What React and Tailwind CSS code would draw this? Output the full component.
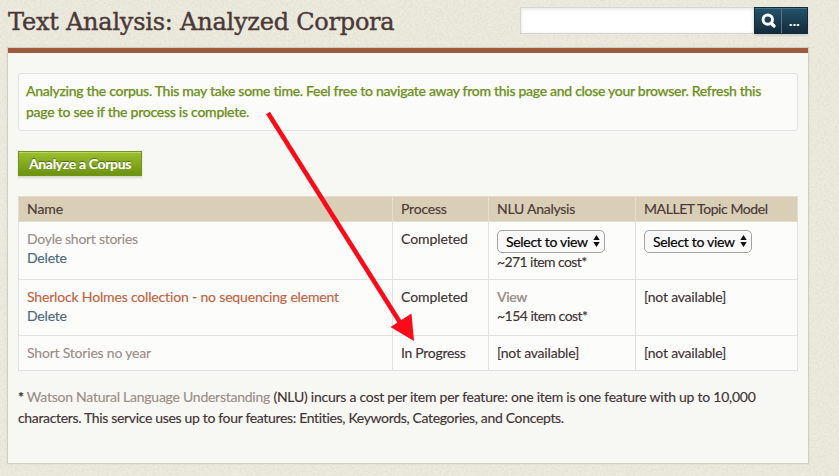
import React from "react";

function PaperTexture() {
  return (
    <svg className="pointer-events-none absolute inset-0 h-full w-full" aria-hidden="true">
      <filter id="paper" x="0" y="0" width="100%" height="100%">
        <feTurbulence type="fractalNoise" baseFrequency="0.45" numOctaves="2" seed="4" />
        <feColorMatrix values="0 0 0 0 0.5  0 0 0 0 0.47  0 0 0 0 0.36  0.5 0.5 0 0 -0.38" />
      </filter>
      <rect width="100%" height="100%" filter="url(#paper)" opacity="0.45" />
    </svg>
  );
}

function SelectBox() {
  return (
    <button className="mt-px flex h-[23px] w-[108px] items-center rounded-[5px] border border-[#a3a3a3] bg-[#f9f9f9] pb-px pl-2 text-[14px] leading-[19px] text-black">
      <span className="w-[87px] text-left whitespace-nowrap tracking-[-0.3px] [-webkit-text-stroke:0.2px_#000]">Select to view</span>
      <svg className="h-3 w-[7px]" viewBox="0 0 7 12" fill="#111">
        <path d="M3.5 0 6.7 5H.3zM3.5 12 .3 7h6.4z" />
      </svg>
    </button>
  );
}

function SearchBar() {
  return (
    <div className="flex h-[27px] w-[288px]">
      <input className="h-[27px] min-w-0 flex-1 border border-r-0 border-[#d5d5d2] bg-white shadow-[inset_0_1px_4px_#e4e4e4] outline-none" />
      <div className="flex h-[27px] w-[54px] border border-[#142b3b] bg-gradient-to-b from-[#24536b] to-[#142b3b] shadow-[0_2px_2px_#d3cfca,inset_0_1px_0_#4b7082]">
        <button className="flex w-[27px] items-center justify-center border-r border-[#597585]">
          <svg className="h-[15px] w-[15px]" viewBox="0 0 15 15" fill="none" stroke="#fff">
            <circle cx="6.8" cy="6.6" r="4.7" strokeWidth="3" />
            <path d="m10.500 10.500 2.500 2.500" strokeWidth="3.2" strokeLinecap="round" />
          </svg>
        </button>
        <button className="flex flex-1 items-center justify-center text-[14px] leading-none font-bold tracking-[0.3px] text-white">
          ...
        </button>
      </div>
    </div>
  );
}

const cell = "border border-[#e1e1dd] px-2 pt-[7px] pb-1.5 align-top font-normal";
const head = "border border-[#e5dccb] px-2 pt-0 pb-px font-normal text-[#4a3937]";

export default function App() {
  return (
    <div className="relative h-[476px] w-[839px] overflow-hidden bg-[#edebdf] font-['Lato',sans-serif] text-[14px] leading-[19px] tracking-[-0.2px] whitespace-nowrap text-[#3f3334] [-webkit-text-stroke:0.15px_currentColor]">
      <PaperTexture />
      <div className="relative flex h-full w-[808px] flex-col pl-2">
        <header className="flex h-12 items-start justify-between pt-[7px]">
          <h1 className="font-['DejaVu_Serif',serif] text-[24px] leading-[30px] tracking-[-0.23px] text-[#4a3937] [-webkit-text-stroke:0.4px_#4a3937]">
            Text Analysis: Analyzed Corpora
          </h1>
          <SearchBar />
        </header>

        <main className="h-[415px] border-t-[5px] border-[#9f5a3e] bg-[#f7f8f3] px-[10px] pt-5 shadow-[0_0_1px_1px_#cfcfc5]">
          <div className="h-[58px] rounded-[3px] border border-[#e3e4e1] bg-[#fbfcf9] px-[7px] pt-[6px] leading-[21px] font-medium text-[#6f901f] [-webkit-text-stroke:0.25px_#6f901f]">
            <p className="tracking-[-0.29px]">
              Analyzing the corpus. This may take some time. Feel free to navigate away from this page and close your browser. Refresh this
            </p>
            <p className="tracking-[-0.26px]">page to see if the process is complete.</p>
          </div>

          <button className="mt-5 block h-[25px] w-[124px] border border-[#6f931b] bg-gradient-to-b from-[#9dc02e] to-[#6c920f] text-center text-[14px] leading-[23px] font-bold tracking-[-0.35px] text-white shadow-[0_2px_2px_#d5d8cd,inset_0_1px_0_#b9d45b] [text-shadow:0_-1px_1px_#46620b]">
            Analyze a Corpus
          </button>

          <table className="mt-5 w-[780px] table-fixed border-collapse bg-[#fcfcfa] text-left">
            <colgroup>
              <col className="w-[374px]" />
              <col className="w-[96px]" />
              <col className="w-[147px]" />
              <col className="w-[162px]" />
            </colgroup>
            <thead>
              <tr className="h-[25px] bg-[#d9ceb6]">
                <th className={head}><span className="tracking-[-0.05px]">Name</span></th>
                <th className={head}>Process</th>
                <th className={head}><span className="tracking-[-0.25px]">NLU Analysis</span></th>
                <th className={head}><span className="tracking-[-0.42px]">MALLET Topic Model</span></th>
              </tr>
            </thead>
            <tbody>
              <tr className="h-[58px]">
                <td className={cell}>
                  <p className="tracking-[-0.28px] text-[#9b8d88]">Doyle short stories</p>
                  <p className="text-[#4b6a7b]">Delete</p>
                </td>
                <td className={cell}><p className="tracking-[-0.06px]">Completed</p></td>
                <td className={cell}>
                  <SelectBox />
                  <p className="-mt-px tracking-[-0.59px]">~271 item cost*</p>
                </td>
                <td className={cell}>
                  <SelectBox />
                </td>
              </tr>
              <tr className="h-[56px]">
                <td className={cell}>
                  <p className="tracking-[-0.17px] text-[#c0623f]">Sherlock Holmes collection - no sequencing element</p>
                  <p className="text-[#4b6a7b]">Delete</p>
                </td>
                <td className={cell}><p className="tracking-[-0.06px]">Completed</p></td>
                <td className={cell}>
                  <p className="font-semibold tracking-[-0.4px] text-[#9b8d88]">View</p>
                  <p className="tracking-[-0.53px]">~154 item cost*</p>
                </td>
                <td className={cell}>[not available]</td>
              </tr>
              <tr className="h-[35px]">
                <td className={cell}>
                  <p className="text-[#9b8d88]">Short Stories no year</p>
                </td>
                <td className={cell}><p className="tracking-[-0.3px]">In Progress</p></td>
                <td className={cell}>[not available]</td>
                <td className={cell}>[not available]</td>
              </tr>
            </tbody>
          </table>

          <div className="mt-[15px] leading-[21px]">
            <p className="tracking-[-0.25px]">
              <b>*</b> <span className="text-[#9b8d88]">Watson Natural Language Understanding</span> (NLU) incurs a cost per item per feature: one item is one feature with up to 10,000
            </p>
            <p className="tracking-[-0.335px]">characters. This service uses up to four features: Entities, Keywords, Categories, and Concepts.</p>
          </div>
        </main>
      </div>

      <svg className="pointer-events-none absolute inset-0 h-full w-full" viewBox="0 0 839 476">
        <path d="M268 113 401 324" stroke="#fb0a19" strokeWidth="4.6" />
        <path d="M390.500 327 411.500 313.500 414 341z" fill="#fb0a19" />
      </svg>
    </div>
  );
}
